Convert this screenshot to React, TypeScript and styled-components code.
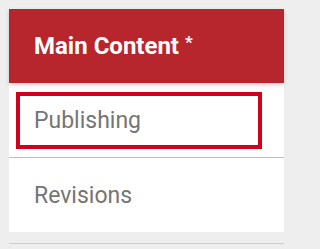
import React from "react";
import styled, { createGlobalStyle } from "styled-components";

const Global = createGlobalStyle`
  html, body { margin: 0; padding: 0; background: #eeeeee; }
  body { font-family: Roboto, "Noto Sans", sans-serif; }
`;

const Page = styled.div`
  padding: 9px 10px 0 9px;
  width: 294px;
  height: 249px;
  box-sizing: border-box;
`;

const Panel = styled.nav`
  background: #ffffff;
  width: 275px;
`;

const Header = styled.div`
  height: 74px;
  background: #b8262d;
  color: #ffffff;
  font-weight: 700;
  font-size: 24px;
  display: flex;
  align-items: center;
  padding-left: 25px;
  box-shadow: 0 2px 4px rgba(0, 0, 0, 0.18);
  position: relative;
`;

const Star = styled.span`
  font-size: 17px;
  margin-left: 6px;
  align-self: center;
  margin-top: -8px;
`;

const List = styled.ul`
  list-style: none;
  margin: 0;
  padding: 0;
`;

const Item = styled.li<{ $last?: boolean }>`
  padding: 9px 22px 8px 7px;
  box-sizing: border-box;
  border-bottom: ${(p) => (p.$last ? "none" : "1px solid #bdbdbd")};
  height: ${(p) => (p.$last ? "74px" : "75px")};
`;

const Link = styled.a<{ $focused?: boolean }>`
  display: flex;
  align-items: center;
  height: 57px;
  box-sizing: border-box;
  border: 4px solid ${(p) => (p.$focused ? "#d0021b" : "transparent")};
  padding-left: 14px;
  color: #757575;
  font-size: 23px;
  text-decoration: none;
`;

const BottomRule = styled.div`
  margin-top: 11px;
  width: 275px;
  height: 1px;
  background: #cccccc;
`;

export default function App() {
  return (
    <>
      <Global />
      <Page>
        <Panel>
          <Header>
            Main Content<Star>*</Star>
          </Header>
          <List>
            <Item>
              <Link href="#" $focused>Publishing</Link>
            </Item>
            <Item $last>
              <Link href="#">Revisions</Link>
            </Item>
          </List>
        </Panel>
        <BottomRule />
      </Page>
    </>
  );
}
